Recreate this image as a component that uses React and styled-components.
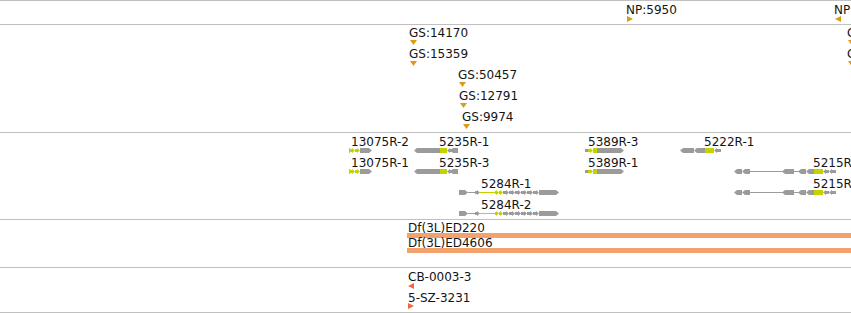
import React from "react";
import styled, { createGlobalStyle } from "styled-components";

const GRAY = "#9b9b9b";
const CDS = "#c5d200";
const GOLD = "#dc9a16";
const SALMON = "#f3a16d";
const RED = "#ef6843";

const GlobalStyle = createGlobalStyle`
  html, body {
    margin: 0;
    padding: 0;
    background: #ffffff;
  }
  body {
    font-family: "DejaVu Sans", Verdana, sans-serif;
  }
`;

const Panel = styled.div`
  width: 851px;
  overflow: hidden;
  border-top: 1px solid #c0c0c0;
  display: flex;
  flex-direction: column;
`;

const Track = styled.div`
  position: relative;
  height: ${(p) => p.$h}px;
  border-bottom: 1px solid #c0c0c0;
`;

// features sit at their genomic coordinate on the track canvas
const Feature = styled.div.attrs((p) => ({
  style: { left: p.$x, top: p.$y },
}))`
  position: absolute;
  display: flex;
  flex-direction: column;
  align-items: flex-start;
`;

const Label = styled.span`
  font-size: 12px;
  line-height: 12px;
  color: #141414;
  white-space: nowrap;
  margin-left: ${(p) => p.$dx || 0}px;
`;

const Mark = styled.svg`
  display: block;
  overflow: visible;
  margin-top: ${(p) => p.$gap || 0}px;
`;

const Bar = styled.div`
  width: ${(p) => p.$w}px;
  height: 5px;
  background: ${SALMON};
  margin-top: ${(p) => p.$gap || 0}px;
`;

function Triangle({ dir, color, gap }) {
  if (dir === "down") {
    return (
      <Mark width="7" height="5" $gap={gap}>
        <polygon points="0,0 7,0 3.5,5" fill={color} />
      </Mark>
    );
  }
  const pts = dir === "right" ? "0,0 6,3 0,6" : "6,0 0,3 6,6";
  return (
    <Mark width="6" height="6" $gap={gap}>
      <polygon points={pts} fill={color} />
    </Mark>
  );
}

// gene glyph parts in page x, drawn relative to x0
function Part({ p, x0 }) {
  const a = p.a - x0;
  const b = p.b - x0;
  switch (p.t) {
    case "box":
      return <rect x={a} y={0} width={b - a} height={5} fill={p.c} />;
    case "thin":
      return <rect x={a} y={1} width={b - a} height={3} fill={p.c} />;
    case "line":
      return <rect x={a} y={2} width={b - a} height={1} fill={p.c} />;
    case "exR":
      return (
        <polygon
          points={`${a},0 ${b - 3},0 ${b},2.5 ${b - 3},5 ${a},5`}
          fill={p.c}
        />
      );
    case "exL":
      return (
        <polygon
          points={`${a},2.5 ${a + 3},0 ${b},0 ${b},5 ${a + 3},5`}
          fill={p.c}
        />
      );
    case "arR":
      return (
        <polygon
          points={`${a},1 ${b - 3},1 ${b - 3},0 ${b},2.5 ${b - 3},5 ${b - 3},4 ${a},4`}
          fill={p.c}
        />
      );
    case "arL":
      return (
        <polygon
          points={`${b},1 ${a + 3},1 ${a + 3},0 ${a},2.5 ${a + 3},5 ${a + 3},4 ${b},4`}
          fill={p.c}
        />
      );
    default:
      return null;
  }
}

function GeneGlyph({ x0, x1, parts }) {
  return (
    <Mark width={x1 - x0} height="5">
      {parts.map((p, i) => (
        <Part key={i} p={p} x0={x0} />
      ))}
    </Mark>
  );
}

const models = {
  g13075: {
    x0: 349,
    x1: 372,
    dx: 2,
    parts: [
      { t: "box", a: 349, b: 350, c: CDS },
      { t: "arR", a: 350, b: 355, c: CDS },
      { t: "arR", a: 355, b: 360, c: CDS },
      { t: "exR", a: 360, b: 372, c: GRAY },
    ],
  },
  g5235: {
    x0: 414,
    x1: 458,
    dx: 25,
    parts: [
      { t: "exL", a: 414, b: 440, c: GRAY },
      { t: "box", a: 440, b: 447, c: CDS },
      { t: "arL", a: 447, b: 452, c: GRAY },
      { t: "exL", a: 450, b: 458, c: GRAY },
    ],
  },
  g5284: {
    x0: 459,
    x1: 559,
    dx: 22,
    parts: [
      { t: "exR", a: 459, b: 468, c: GRAY },
      { t: "line", a: 468, b: 477, c: GRAY },
      { t: "arR", a: 475, b: 480, c: GRAY },
      { t: "line", a: 480, b: 495, c: CDS },
      { t: "arR", a: 495, b: 499, c: CDS },
      { t: "arR", a: 499, b: 503, c: CDS },
      { t: "arR", a: 503, b: 509, c: GRAY },
      { t: "arR", a: 509, b: 515, c: GRAY },
      { t: "arR", a: 515, b: 521, c: GRAY },
      { t: "arR", a: 521, b: 527, c: GRAY },
      { t: "arR", a: 527, b: 533, c: GRAY },
      { t: "arR", a: 533, b: 539, c: GRAY },
      { t: "exR", a: 539, b: 559, c: GRAY },
    ],
  },
  g5389: {
    x0: 585,
    x1: 624,
    dx: 3,
    parts: [
      { t: "thin", a: 585, b: 588, c: GRAY },
      { t: "arR", a: 588, b: 593, c: CDS },
      { t: "box", a: 593, b: 597, c: CDS },
      { t: "exR", a: 597, b: 624, c: GRAY },
    ],
  },
  g5222: {
    x0: 680,
    x1: 721,
    dx: 24,
    parts: [
      { t: "exL", a: 680, b: 694, c: GRAY },
      { t: "exL", a: 694, b: 705, c: GRAY },
      { t: "box", a: 705, b: 714, c: CDS },
      { t: "arL", a: 714, b: 721, c: GRAY },
    ],
  },
  g5215: {
    x0: 734,
    x1: 836,
    dx: 79,
    parts: [
      { t: "exL", a: 734, b: 742, c: GRAY },
      { t: "exL", a: 742, b: 750, c: GRAY },
      { t: "line", a: 750, b: 783, c: GRAY },
      { t: "exL", a: 782, b: 794, c: GRAY },
      { t: "line", a: 794, b: 800, c: GRAY },
      { t: "exL", a: 798, b: 806, c: GRAY },
      { t: "exL", a: 806, b: 814, c: GRAY },
      { t: "box", a: 814, b: 823, c: CDS },
      { t: "arL", a: 823, b: 829, c: GRAY },
      { t: "arL", a: 829, b: 836, c: GRAY },
    ],
  },
};

const genes = [
  { name: "13075R-2", m: "g13075", row: 0 },
  { name: "13075R-1", m: "g13075", row: 1 },
  { name: "5235R-1", m: "g5235", row: 0 },
  { name: "5235R-3", m: "g5235", row: 1 },
  { name: "5284R-1", m: "g5284", row: 2 },
  { name: "5284R-2", m: "g5284", row: 3 },
  { name: "5389R-3", m: "g5389", row: 0 },
  { name: "5389R-1", m: "g5389", row: 1 },
  { name: "5222R-1", m: "g5222", row: 0 },
  { name: "5215R-1", m: "g5215", row: 1 },
  { name: "5215R-2", m: "g5215", row: 2 },
];

const nps = [
  { name: "NP:5950", x: 627, dir: "right" },
  { name: "NP:6011", x: 835, dir: "left" },
];

const gs = [
  { name: "GS:14170", x: 410, row: 0 },
  { name: "GS:15359", x: 410, row: 1 },
  { name: "GS:50457", x: 459, row: 2 },
  { name: "GS:12791", x: 460, row: 3 },
  { name: "GS:9974", x: 463, row: 4 },
  { name: "GS:14171", x: 848, row: 0 },
  { name: "GS:15360", x: 848, row: 1 },
];

const deletions = [
  { name: "Df(3L)ED220", row: 0 },
  { name: "Df(3L)ED4606", row: 1 },
];

const inserts = [
  { name: "CB-0003-3", dir: "left", row: 0, gap: 0 },
  { name: "5-SZ-3231", dir: "right", row: 1, gap: -1 },
];

export default function App() {
  return (
    <>
      <GlobalStyle />
      <Panel>
        <Track $h={23}>
          {nps.map((f) => (
            <Feature key={f.name} $x={f.x} $y={3}>
              <Label $dx={-1}>{f.name}</Label>
              <Triangle dir={f.dir} color={GOLD} />
            </Feature>
          ))}
        </Track>

        <Track $h={107}>
          {gs.map((f) => (
            <Feature key={f.name} $x={f.x} $y={2 + f.row * 21}>
              <Label $dx={-1}>{f.name}</Label>
              <Triangle dir="down" color={GOLD} gap={1} />
            </Feature>
          ))}
        </Track>

        <Track $h={86}>
          {genes.map((g) => {
            const m = models[g.m];
            return (
              <Feature key={g.name} $x={m.x0} $y={3 + g.row * 21}>
                <Label $dx={m.dx}>{g.name}</Label>
                <GeneGlyph x0={m.x0} x1={m.x1} parts={m.parts} />
              </Feature>
            );
          })}
        </Track>

        <Track $h={47}>
          {deletions.map((d) => (
            <Feature key={d.name} $x={407} $y={2 + d.row * 15}>
              <Label $dx={1}>{d.name}</Label>
              <Bar $w={460} $gap={-1} />
            </Feature>
          ))}
        </Track>

        <Track $h={44}>
          {inserts.map((f) => (
            <Feature key={f.name} $x={408} $y={3 + f.row * 21}>
              <Label $dx={0}>{f.name}</Label>
              <Triangle dir={f.dir} color={RED} gap={f.gap} />
            </Feature>
          ))}
        </Track>
      </Panel>
    </>
  );
}
